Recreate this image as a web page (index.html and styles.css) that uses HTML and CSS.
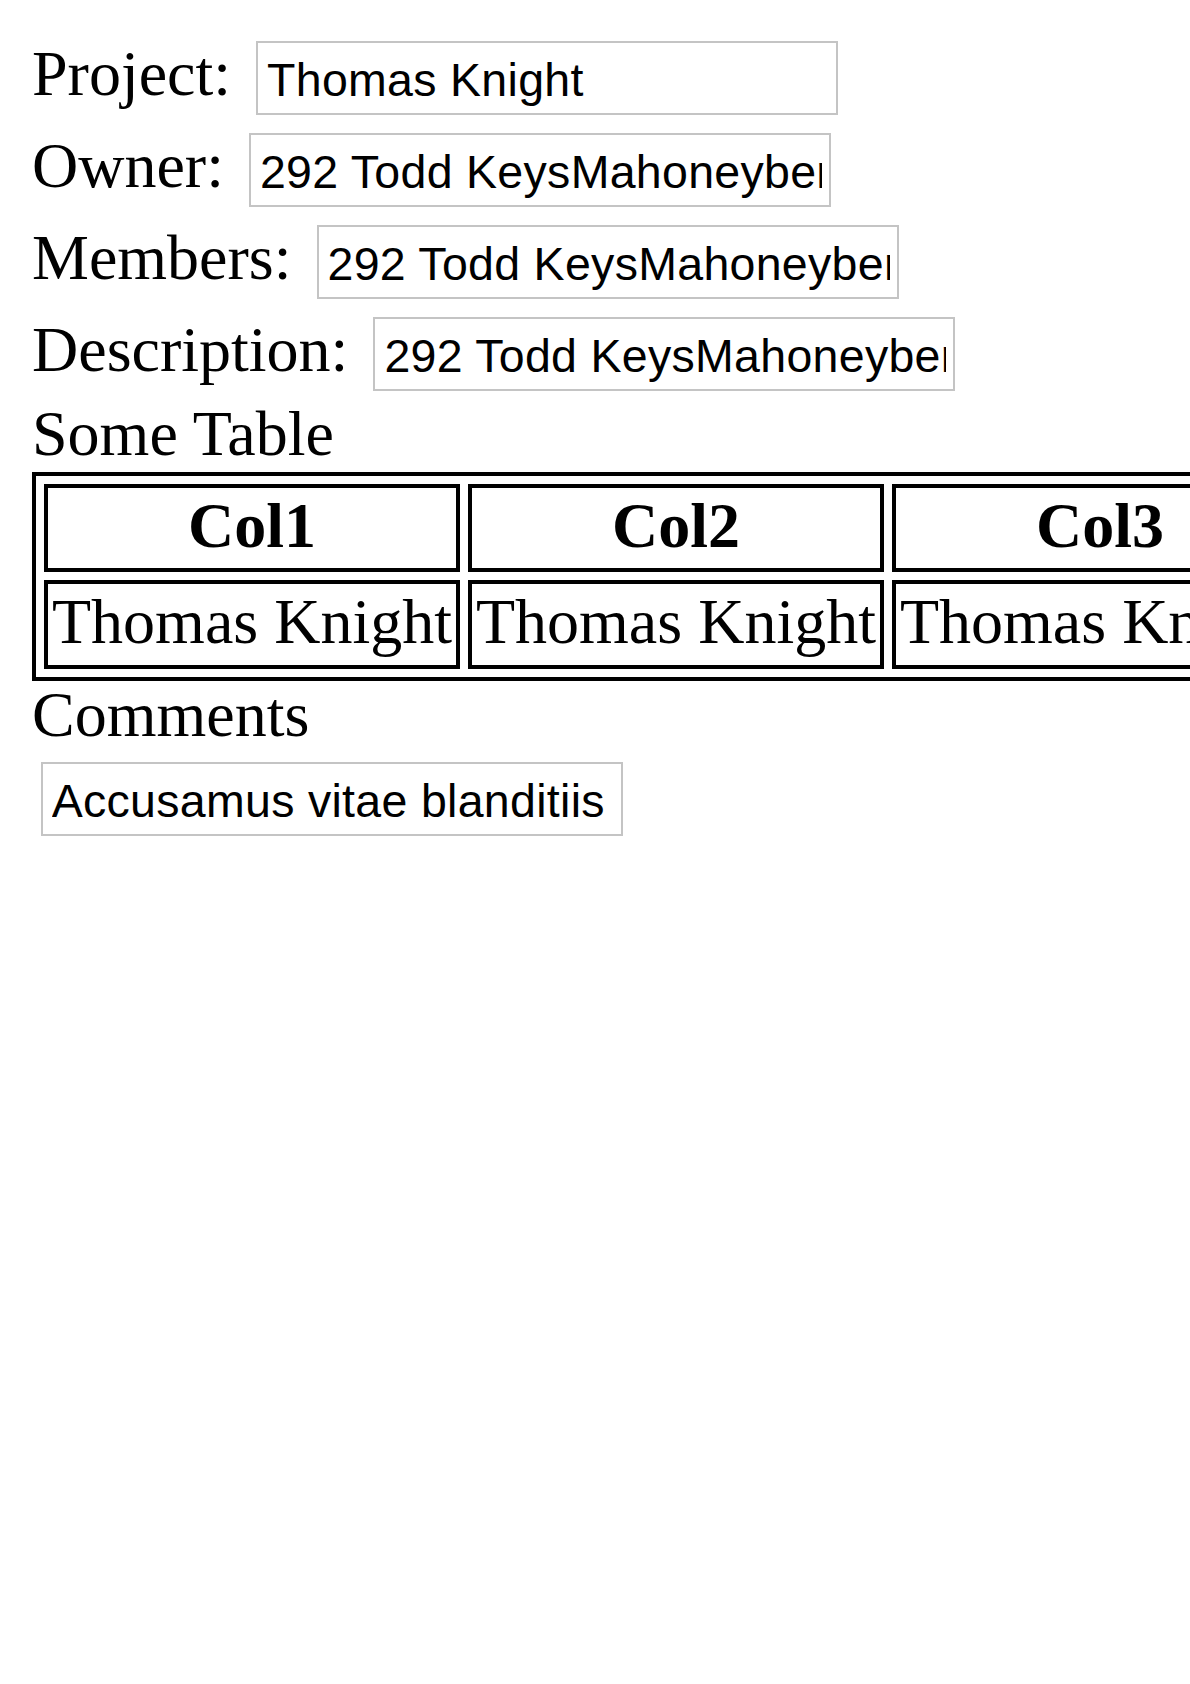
FILE: index.html
```html
<!DOCTYPE html>
<html>
<head>
<meta charset="utf-8">
<title>Project</title>
<link rel="stylesheet" href="styles.css">
</head>
<body>
  <div class="row"><span class="label">Project:</span><input class="field" type="text" value="Thomas Knight"></div>
  <div class="row"><span class="label">Owner:</span><input class="field" type="text" value="292 Todd KeysMahoneyberg, WA 28345"></div>
  <div class="row"><span class="label">Members:</span><input class="field" type="text" value="292 Todd KeysMahoneyberg, WA 28345"></div>
  <div class="row"><span class="label">Description:</span><input class="field" type="text" value="292 Todd KeysMahoneyberg, WA 28345"></div>
  <div class="heading">Some Table</div>
  <table class="grid">
    <tr><th>Col1</th><th>Col2</th><th>Col3</th></tr>
    <tr><td>Thomas Knight</td><td>Thomas Knight</td><td>Thomas Knight</td></tr>
  </table>
  <div class="heading">Comments</div>
  <div class="comment-row"><input class="field comment" type="text" value="Accusamus vitae blanditiis"></div>
</body>
</html>
```
FILE: styles.css
```css
html {
  background: #fff;
}
body {
  margin: 32px 0 32px 32px;
  font-family: "Liberation Serif", "Times New Roman", serif;
  font-size: 64px;
  color: #000;
}
.row {
  display: flex;
  align-items: flex-start;
  gap: 16px;
  height: 92px;
}
.label {
  display: block;
  line-height: 84.2px;
  white-space: nowrap;
}
.field {
  box-sizing: border-box;
  width: 582px;
  height: 74px;
  margin: 8.7px 0 0 9px;
  border: 2px solid #c4c4c4;
  border-radius: 0;
  padding: 4.4px 7px 0 9px;
  font-family: "Liberation Sans", Arial, sans-serif;
  font-size: 46.5px;
  letter-spacing: 0.3px;
  color: #000;
  background: #fff;
  outline: none;
}
.heading {
  line-height: 67px;
  padding-bottom: 4.5px;
  white-space: nowrap;
}
.grid {
  border: 4px solid #000;
  border-collapse: separate;
  border-spacing: 8px;
  white-space: nowrap;
}
.grid th,
.grid td {
  border: 4px solid #000;
  padding: 4px 4px 8.5px;
  line-height: 68px;
  font-size: 64px;
}
.grid th {
  font-weight: bold;
  text-align: center;
}
.grid td {
  text-align: left;
}
.comment-row {
  height: 92px;
}
.comment {
  display: block;
  margin: 9.9px 0 0 8.7px;
}
```
